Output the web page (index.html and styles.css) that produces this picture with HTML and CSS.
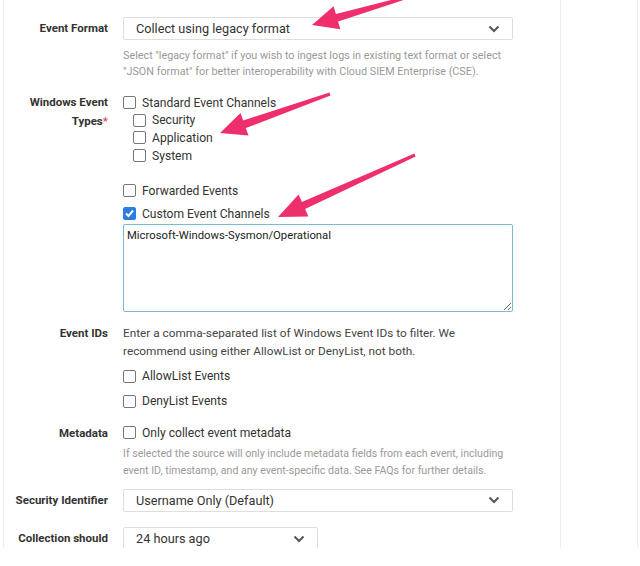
FILE: index.html
```html
<!DOCTYPE html>
<html>
<head>
<meta charset="utf-8">
<link rel="stylesheet" href="styles.css">
</head>
<body>
<div class="page">
  <div class="panel">
    <form class="form">
      <div class="label label-mid">Event Format</div>
      <div class="control">
        <div class="select">
          <span>Collect using legacy format</span>
          <svg class="chev" width="12" height="8" viewBox="0 0 12 8"><polyline points="1.5,1.5 6,6 10.5,1.5" fill="none" stroke="#555" stroke-width="2"/></svg>
        </div>
        <p class="help help-a">Select "legacy format" if you wish to ingest logs in existing text format or select "JSON format" for better interoperability with Cloud SIEM Enterprise (CSE).</p>
      </div>

      <div class="label label-types">Windows Event<br>Types<span class="req">*</span></div>
      <div class="control control-types">
        <div class="check"><span class="box"></span>Standard Event Channels</div>
        <div class="sub">
          <div class="check"><span class="box"></span>Security</div>
          <div class="check"><span class="box"></span>Application</div>
          <div class="check"><span class="box"></span>System</div>
        </div>
        <div class="check check-fwd"><span class="box"></span>Forwarded Events</div>
        <div class="check check-custom"><span class="box checked"><svg width="11" height="11" viewBox="0 0 11 11"><polyline points="2,5.5 4.5,8 9,2.5" fill="none" stroke="#fff" stroke-width="2"/></svg></span>Custom Event Channels</div>
        <textarea class="area" readonly>Microsoft-Windows-Sysmon/Operational</textarea>
      </div>

      <div class="label label-ids">Event IDs</div>
      <div class="control control-ids">
        <p class="desc">Enter a comma-separated list of Windows Event IDs to filter. We recommend using either AllowList or DenyList, not both.</p>
        <div class="check check-allow"><span class="box"></span>AllowList Events</div>
        <div class="check check-deny"><span class="box"></span>DenyList Events</div>
      </div>

      <div class="label label-meta">Metadata</div>
      <div class="control control-meta">
        <div class="check"><span class="box"></span>Only collect event metadata</div>
        <p class="help help-b">If selected the source will only include metadata fields from each event, including event ID, timestamp, and any event-specific data. See FAQs for further details.</p>
      </div>

      <div class="label label-mid label-sec">Security Identifier</div>
      <div class="control control-sec">
        <div class="select">
          <span>Username Only (Default)</span>
          <svg class="chev" width="12" height="8" viewBox="0 0 12 8"><polyline points="1.5,1.5 6,6 10.5,1.5" fill="none" stroke="#555" stroke-width="2"/></svg>
        </div>
      </div>

      <div class="label label-mid label-col">Collection should</div>
      <div class="control control-col">
        <div class="select select-short">
          <span>24 hours ago</span>
          <svg class="chev" width="12" height="8" viewBox="0 0 12 8"><polyline points="1.5,1.5 6,6 10.5,1.5" fill="none" stroke="#555" stroke-width="2"/></svg>
        </div>
      </div>
    </form>
  </div>
  <div class="side"></div>
</div>
<svg class="arrows" width="640" height="566" viewBox="0 0 640 566">
  <g fill="#ef2f6b">
    <polygon points="312,25 333.6,6.2 335.9,13.9 404.6,-3.4 405.4,-0.6 338.1,21.5 340.3,29.2"/>
    <polygon points="220,133 240.5,113 243.2,120.5 329.5,92.6 330.5,95.4 245.8,128.1 248.5,135.6"/>
    <polygon points="278,217 298.6,194.6 301.9,201.9 414.4,153.6 415.6,156.4 305.1,209.1 308.4,216.4"/>
  </g>
</svg>
</body>
</html>
```

FILE: styles.css
```css
* { box-sizing: border-box; }
html, body { margin: 0; padding: 0; background: #fff; }
body {
  width: 640px;
  height: 566px;
  overflow: hidden;
  position: relative;
  font-family: Roboto, "Noto Sans", sans-serif;
  color: #333;
}
.page {
  display: flex;
  height: 548px;
  overflow: hidden;
  padding-left: 3px;
}
.panel {
  width: 558px;
  border-left: 1px solid #ececec;
  border-right: 1px solid #ececec;
  height: 100%;
  overflow: hidden;
}
.side {
  width: 77px;
  height: 100%;
  border-right: 1px solid #ececec;
}
.form {
  display: grid;
  grid-template-columns: 104px 390px;
  column-gap: 15px;
  align-items: start;
  margin: 0;
  padding-top: 17px;
}
.label {
  text-align: right;
  font-weight: 700;
  font-size: 11.5px;
  color: #333;
  line-height: 19px;
}
.label-mid { line-height: 23px; }
.req { color: #d9534f; }
.control { min-width: 0; }
.select {
  height: 23px;
  border: 1px solid #dedede;
  border-radius: 2px;
  display: flex;
  align-items: center;
  justify-content: space-between;
  padding: 0 12px 0 12px;
  font-size: 12.7px;
  color: #333;
  background: #fff;
}
.select-short { width: 195px; }
.chev { display: block; }
.help {
  margin: 8px 0 0 0;
  font-size: 10.8px;
  line-height: 16px;
  color: #999;
}
.help-b { margin-top: 3px; line-height: 17px; font-size: 10.6px; }
.label-types { margin-top: 13px; }
.control-types { margin-top: 14px; }
.check {
  display: flex;
  align-items: center;
  height: 17.6px;
  font-size: 12.1px;
  color: #333;
}
.box {
  width: 13px;
  height: 13px;
  border: 1px solid #777;
  border-radius: 2px;
  margin-right: 6px;
  flex: none;
  display: flex;
  align-items: center;
  justify-content: center;
  background: #fff;
}
.box.checked { background: #2a7de1; border-color: #2a7de1; }
.sub { padding-left: 10px; }
.check-fwd { margin-top: 17.5px; }
.check-custom { margin-top: 5.5px; height: 18px; }
.area {
  display: block;
  width: 390px;
  height: 88px;
  margin: 1px 0 0 0;
  border: 1px solid #7cb9d2;
  border-radius: 2px;
  padding: 4px 3px;
  font-family: Roboto, "Noto Sans", sans-serif;
  font-size: 11.3px;
  line-height: 14px;
  color: #222;
  resize: vertical;
  outline: none;
}
.label-ids { margin-top: 12.5px; line-height: 18px; }
.control-ids { margin-top: 12.5px; }
.desc {
  margin: 0;
  font-size: 11.8px;
  line-height: 18px;
  color: #444;
}
.check-allow { margin-top: 7px; }
.check-deny { margin-top: 7.5px; }
.label-meta { margin-top: 14px; line-height: 18px; }
.control-meta { margin-top: 14px; }
.label-sec, .control-sec { margin-top: 10px; }
.label-col, .control-col { margin-top: 15.5px; }
.arrows {
  position: absolute;
  left: 0;
  top: 0;
  pointer-events: none;
}
```
